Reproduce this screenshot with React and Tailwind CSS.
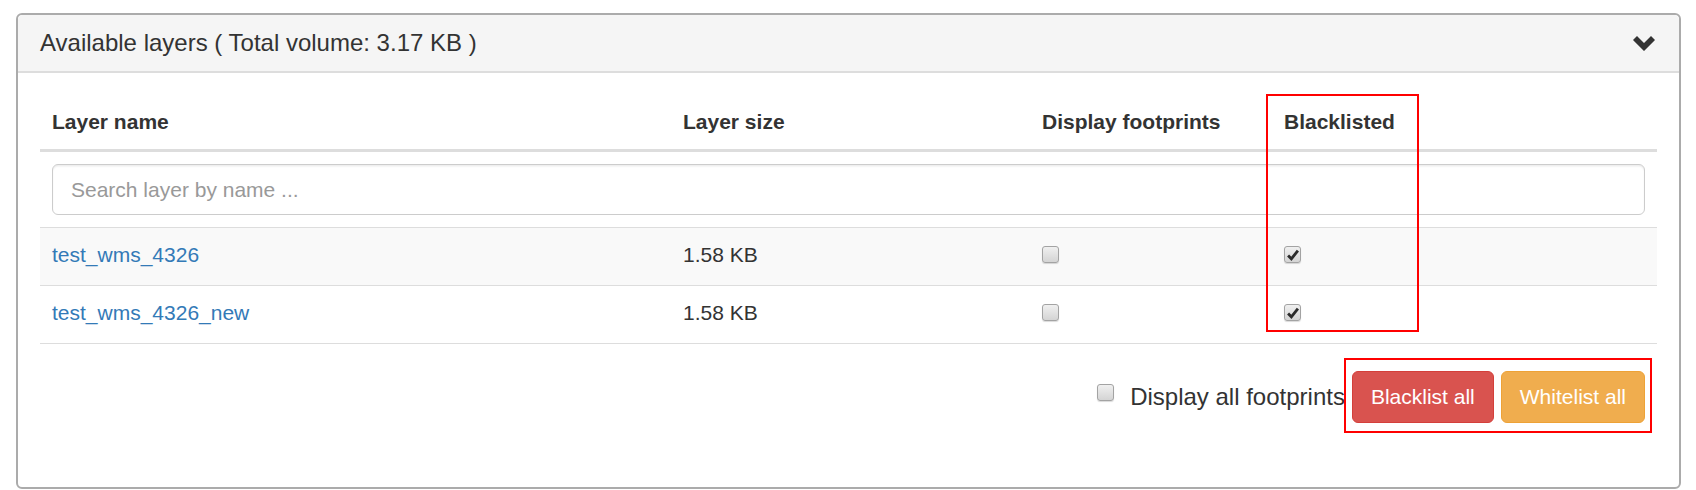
import React from "react";

const layers = [
  { name: "test_wms_4326", size: "1.58 KB", footprint: false, blacklisted: true },
  { name: "test_wms_4326_new", size: "1.58 KB", footprint: false, blacklisted: true },
];

const Box = ({ checked, className = "" }) => (
  <span
    className={`flex h-[17px] w-[17px] items-center justify-center rounded-[3px] border-[1.5px] border-[#a3a3a3] bg-gradient-to-b from-[#f0f0f0] to-[#d4d4d4] shadow-[0_1px_1px_rgba(0,0,0,0.15)] ${className}`}
  >
    {checked && (
      <svg width="12" height="12" viewBox="0 0 11 11">
        <path d="M1 6 L4 9 L10 1.5" fill="none" stroke="#2b2b2b" strokeWidth="2.6" />
      </svg>
    )}
  </span>
);

const cols = "grid grid-cols-[631px_359px_242px_1fr]";

export default function App() {
  return (
    <div className="relative pl-[16px] pr-[15px] pt-[13px] font-['Liberation_Sans',Arial,sans-serif] text-[21px] leading-[30px] text-[#333]">
      <div className="rounded-[6px] border-2 border-[#ababab] bg-white">
        {/* Panel heading */}
        <div className="flex h-[58px] items-center justify-between rounded-t-[5px] border-b-2 border-[#dddddd] bg-[#f5f5f5] pl-[22px] pr-[24px]">
          <h3 className="text-[24px] leading-[26px]">Available layers ( Total volume: 3.17 KB )</h3>
          <svg width="22" height="15" viewBox="0 0 22 15">
            <path d="M0 4 L4 0 L11 7 L18 0 L22 4 L11 15 Z" fill="#333" />
          </svg>
        </div>

        {/* Panel body */}
        <div className="pl-[22px] pr-[22px] pt-[22px] pb-[64px]">
          <div className={`${cols} border-b-[3px] border-[#dddddd] font-bold`}>
            <div className="p-[12px]">Layer name</div>
            <div className="p-[12px]">Layer size</div>
            <div className="p-[12px]">Display footprints</div>
            <div className="p-[12px]">Blacklisted</div>
          </div>

          <div className="p-[12px]">
            <input
              type="text"
              placeholder="Search layer by name ..."
              className="h-[51px] w-full rounded-[6px] border-[1.5px] border-[#cccccc] px-[18px] text-[21px] shadow-[inset_0_1.5px_1.5px_rgba(0,0,0,0.075)] outline-none placeholder:text-[#999]"
            />
          </div>

          {layers.map((l, i) => (
            <div
              key={l.name}
              className={`${cols} h-[58px] items-center border-t border-[#dddddd] pb-[4px] ${i % 2 === 0 ? "bg-[#f9f9f9]" : ""}`}
            >
              <a href="#" className="px-[12px] text-[#337ab7]">{l.name}</a>
              <div className="px-[12px]">{l.size}</div>
              <div className="px-[12px]"><Box checked={l.footprint} /></div>
              <div className="px-[12px]"><Box checked={l.blacklisted} /></div>
            </div>
          ))}

          {/* Footer actions */}
          <div className="flex items-center justify-end border-t border-[#dddddd] px-[12px] pt-[27px]">
            <Box className="-translate-y-[5px]" />
            <span className="ml-[16px] text-[24px]">Display all footprints</span>
            <button className="ml-[7px] h-[52px] rounded-[6px] border-[1.5px] border-[#d43f3a] bg-[#d9534f] px-[18px] text-[21px] text-white">
              Blacklist all
            </button>
            <button className="ml-[7px] h-[52px] rounded-[6px] border-[1.5px] border-[#eea236] bg-[#f0ad4e] px-[18px] text-[21px] text-white">
              Whitelist all
            </button>
          </div>
        </div>
      </div>

      {/* Annotation overlays */}
      <div className="absolute left-[1266px] top-[94px] h-[238px] w-[153px] border-2 border-[#ff0000]" />
      <div className="absolute left-[1344px] top-[358px] h-[75px] w-[308px] border-2 border-[#ff0000]" />
    </div>
  );
}
